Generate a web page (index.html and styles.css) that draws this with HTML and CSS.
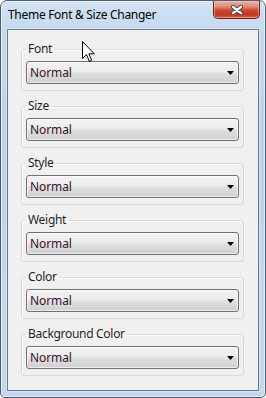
FILE: index.html
```html
<!DOCTYPE html>
<html>
<head>
<meta charset="utf-8">
<link rel="stylesheet" href="styles.css">
</head>
<body>
<div class="window">
  <div class="titlebar">
    <span class="title">Theme Font &amp; Size Changer</span>
    <div class="close">
      <svg width="14" height="10" viewBox="0 0 14 10">
        <path d="M3 1.8 L11 8.2 M11 1.8 L3 8.2" stroke="#4a4a52" stroke-width="4.2" stroke-linecap="round"/>
        <path d="M3 1.8 L11 8.2 M11 1.8 L3 8.2" stroke="#ffffff" stroke-width="2.2" stroke-linecap="round"/>
      </svg>
    </div>
  </div>
  <div class="client">
    <fieldset class="group"><legend>Font</legend><div class="combo"><span class="value">Normal</span><svg class="arrow" width="7" height="4" viewBox="0 0 7 4"><path d="M0 0 H7 L3.5 4 Z" fill="#000"/></svg></div></fieldset>
    <fieldset class="group"><legend>Size</legend><div class="combo"><span class="value">Normal</span><svg class="arrow" width="7" height="4" viewBox="0 0 7 4"><path d="M0 0 H7 L3.5 4 Z" fill="#000"/></svg></div></fieldset>
    <fieldset class="group"><legend>Style</legend><div class="combo"><span class="value">Normal</span><svg class="arrow" width="7" height="4" viewBox="0 0 7 4"><path d="M0 0 H7 L3.5 4 Z" fill="#000"/></svg></div></fieldset>
    <fieldset class="group"><legend>Weight</legend><div class="combo"><span class="value">Normal</span><svg class="arrow" width="7" height="4" viewBox="0 0 7 4"><path d="M0 0 H7 L3.5 4 Z" fill="#000"/></svg></div></fieldset>
    <fieldset class="group"><legend>Color</legend><div class="combo"><span class="value">Normal</span><svg class="arrow" width="7" height="4" viewBox="0 0 7 4"><path d="M0 0 H7 L3.5 4 Z" fill="#000"/></svg></div></fieldset>
    <fieldset class="group"><legend>Background Color</legend><div class="combo"><span class="value">Normal</span><svg class="arrow" width="7" height="4" viewBox="0 0 7 4"><path d="M0 0 H7 L3.5 4 Z" fill="#000"/></svg></div></fieldset>
  </div>
  <svg class="cursor" width="14" height="22" viewBox="0 0 14 22">
    <path d="M0.5 0.5 L0.5 17.5 L4.5 13.6 L7.3 20.3 L9.6 19.3 L6.9 12.8 L12.3 12.8 Z" fill="#ffffff" stroke="#000000" stroke-width="1" stroke-linejoin="miter"/>
  </svg>
</div>
</body>
</html>
```

FILE: styles.css
```css
html, body {
  margin: 0;
  padding: 0;
  background: #ffffff;
}

.window {
  position: relative;
  width: 266px;
  height: 398px;
  box-sizing: border-box;
  display: flex;
  flex-direction: column;
  padding: 0 6px 6px;
  border: 1px solid #4e5d6f;
  border-radius: 7px 7px 5px 5px;
  background: linear-gradient(180deg, #d3e3f4 0px, #c6d9ef 28px, #bfd4eb 120px, #c4d8ee 100%);
  box-shadow: inset 0 0 0 1px rgba(255, 255, 255, 0.55);
  font-family: "Noto Sans", "Open Sans", sans-serif;
}

.titlebar {
  height: 28px;
  margin: 0 -6px;
  padding: 0 5px 0 7px;
  display: flex;
  justify-content: space-between;
  align-items: flex-start;
}

.title {
  padding-top: 6px;
  font-size: 12px;
  line-height: 16px;
  letter-spacing: -0.3px;
  color: #000000;
}

.close {
  width: 47px;
  height: 18px;
  box-sizing: border-box;
  border: 1px solid #6a2418;
  border-top: none;
  border-radius: 0 0 5px 5px;
  background: linear-gradient(180deg, #eab0a3 0%, #dd8a77 35%, #c9452d 55%, #c1361f 80%, #d4624a 100%);
  box-shadow: inset 0 0 0 1px rgba(255, 220, 210, 0.45);
  display: flex;
  align-items: center;
  justify-content: center;
}

.client {
  flex: 1;
  display: flex;
  flex-direction: column;
  gap: 7px;
  padding: 11px 14px 14px 13px;
  background: #f0f0f0;
  border: 1px solid #67788b;
  box-shadow: 0 0 0 1px rgba(255, 255, 255, 0.35);
}

.group {
  margin: 0;
  min-width: 0;
  padding: 4px 4px 6px;
  border: 1px solid #d9d9d9;
  border-radius: 3px;
  box-shadow: inset 1px 1px 0 #ffffff;
}

.group legend {
  padding: 0 2px;
  font-size: 12px;
  line-height: 16px;
  letter-spacing: -0.3px;
  color: #1e1e1e;
}

.combo {
  height: 23px;
  box-sizing: border-box;
  display: flex;
  align-items: center;
  justify-content: space-between;
  padding: 0 4px 0 3px;
  border: 1px solid #707070;
  border-radius: 3px;
  background: linear-gradient(180deg, #f3f3f3 0%, #ececec 45%, #dedede 55%, #d0d0d0 100%);
  box-shadow: inset 0 0 0 1px rgba(255, 255, 255, 0.6);
}

.value {
  font-size: 12px;
  line-height: 16px;
  letter-spacing: -0.1px;
  color: #3a1230;
}

.arrow {
  display: block;
}

.cursor {
  position: absolute;
  left: 81px;
  top: 40px;
}
```
